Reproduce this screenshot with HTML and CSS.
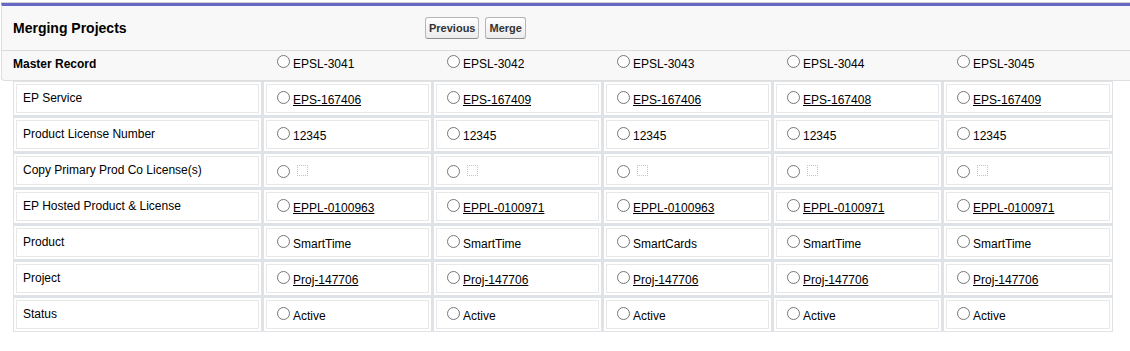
FILE: index.html
```html
<!DOCTYPE html>
<html lang="en">
<head>
  <meta charset="UTF-8">
  <meta name="viewport" content="width=device-width, initial-scale=1">
  <title>Merging Projects</title>
  <link rel="stylesheet" href="styles.css">
</head>
<body>

  <!-- Header block -->
  <div class="page-block">
    <div class="block-header">
      <h2 class="block-title">Merging Projects</h2>
      <div class="block-buttons">
        <button class="btn" type="button">Previous</button>
        <button class="btn" type="button">Merge</button>
      </div>
    </div>
    <div class="master-row">
      <span class="master-label">Master Record</span>
      <label class="opt"><input type="radio" name="master">EPSL-3041</label>
      <label class="opt"><input type="radio" name="master">EPSL-3042</label>
      <label class="opt"><input type="radio" name="master">EPSL-3043</label>
      <label class="opt"><input type="radio" name="master">EPSL-3044</label>
      <label class="opt"><input type="radio" name="master">EPSL-3045</label>
    </div>
  </div>

  <!-- Field comparison -->
  <div class="merge-grid">
    <div class="merge-row">
      <div class="cell"><div class="box label">EP Service</div></div>
      <div class="cell"><div class="box"><label class="opt"><input type="radio" name="svc"><a href="#">EPS-167406</a></label></div></div>
      <div class="cell"><div class="box"><label class="opt"><input type="radio" name="svc"><a href="#">EPS-167409</a></label></div></div>
      <div class="cell"><div class="box"><label class="opt"><input type="radio" name="svc"><a href="#">EPS-167406</a></label></div></div>
      <div class="cell"><div class="box"><label class="opt"><input type="radio" name="svc"><a href="#">EPS-167408</a></label></div></div>
      <div class="cell"><div class="box"><label class="opt"><input type="radio" name="svc"><a href="#">EPS-167409</a></label></div></div>
    </div>
    <div class="merge-row">
      <div class="cell"><div class="box label">Product License Number</div></div>
      <div class="cell"><div class="box"><label class="opt"><input type="radio" name="pln">12345</label></div></div>
      <div class="cell"><div class="box"><label class="opt"><input type="radio" name="pln">12345</label></div></div>
      <div class="cell"><div class="box"><label class="opt"><input type="radio" name="pln">12345</label></div></div>
      <div class="cell"><div class="box"><label class="opt"><input type="radio" name="pln">12345</label></div></div>
      <div class="cell"><div class="box"><label class="opt"><input type="radio" name="pln">12345</label></div></div>
    </div>
    <div class="merge-row">
      <div class="cell"><div class="box label">Copy Primary Prod Co License(s)</div></div>
      <div class="cell"><div class="box low"><label class="opt"><input type="radio" name="cpy"><span class="check"></span></label></div></div>
      <div class="cell"><div class="box low"><label class="opt"><input type="radio" name="cpy"><span class="check"></span></label></div></div>
      <div class="cell"><div class="box low"><label class="opt"><input type="radio" name="cpy"><span class="check"></span></label></div></div>
      <div class="cell"><div class="box low"><label class="opt"><input type="radio" name="cpy"><span class="check"></span></label></div></div>
      <div class="cell"><div class="box low"><label class="opt"><input type="radio" name="cpy"><span class="check"></span></label></div></div>
    </div>
    <div class="merge-row">
      <div class="cell"><div class="box label">EP Hosted Product &amp; License</div></div>
      <div class="cell"><div class="box"><label class="opt"><input type="radio" name="hpl"><a href="#">EPPL-0100963</a></label></div></div>
      <div class="cell"><div class="box"><label class="opt"><input type="radio" name="hpl"><a href="#">EPPL-0100971</a></label></div></div>
      <div class="cell"><div class="box"><label class="opt"><input type="radio" name="hpl"><a href="#">EPPL-0100963</a></label></div></div>
      <div class="cell"><div class="box"><label class="opt"><input type="radio" name="hpl"><a href="#">EPPL-0100971</a></label></div></div>
      <div class="cell"><div class="box"><label class="opt"><input type="radio" name="hpl"><a href="#">EPPL-0100971</a></label></div></div>
    </div>
    <div class="merge-row">
      <div class="cell"><div class="box label">Product</div></div>
      <div class="cell"><div class="box"><label class="opt"><input type="radio" name="prod">SmartTime</label></div></div>
      <div class="cell"><div class="box"><label class="opt"><input type="radio" name="prod">SmartTime</label></div></div>
      <div class="cell"><div class="box"><label class="opt"><input type="radio" name="prod">SmartCards</label></div></div>
      <div class="cell"><div class="box"><label class="opt"><input type="radio" name="prod">SmartTime</label></div></div>
      <div class="cell"><div class="box"><label class="opt"><input type="radio" name="prod">SmartTime</label></div></div>
    </div>
    <div class="merge-row">
      <div class="cell"><div class="box label">Project</div></div>
      <div class="cell"><div class="box"><label class="opt"><input type="radio" name="proj"><a href="#">Proj-147706</a></label></div></div>
      <div class="cell"><div class="box"><label class="opt"><input type="radio" name="proj"><a href="#">Proj-147706</a></label></div></div>
      <div class="cell"><div class="box"><label class="opt"><input type="radio" name="proj"><a href="#">Proj-147706</a></label></div></div>
      <div class="cell"><div class="box"><label class="opt"><input type="radio" name="proj"><a href="#">Proj-147706</a></label></div></div>
      <div class="cell"><div class="box"><label class="opt"><input type="radio" name="proj"><a href="#">Proj-147706</a></label></div></div>
    </div>
    <div class="merge-row">
      <div class="cell"><div class="box label">Status</div></div>
      <div class="cell"><div class="box"><label class="opt"><input type="radio" name="stat">Active</label></div></div>
      <div class="cell"><div class="box"><label class="opt"><input type="radio" name="stat">Active</label></div></div>
      <div class="cell"><div class="box"><label class="opt"><input type="radio" name="stat">Active</label></div></div>
      <div class="cell"><div class="box"><label class="opt"><input type="radio" name="stat">Active</label></div></div>
      <div class="cell"><div class="box"><label class="opt"><input type="radio" name="stat">Active</label></div></div>
    </div>
  </div>

</body>
</html>
```

FILE: styles.css
```css
:root {
  --accent: #6767c5;
  --panel-bg: #f8f8f8;
  --panel-line: #dedede;
  --band: #dfe2e6;
  --box-line: #e8e8e8;
}
* { box-sizing: border-box; }
html, body { overflow: hidden; }
body {
  margin: 0;
  font-family: "Liberation Sans", Arial, sans-serif;
  font-size: 12px;
  color: #000;
  background: #fff;
}

/* header block */
.page-block {
  margin: 3px -4px 0 1px;
  background: var(--panel-bg);
  border-top: 3px solid var(--accent);
  border-left: 1px solid var(--panel-line);
  border-bottom: 1px solid var(--panel-line);
  border-bottom-left-radius: 4px;
  box-shadow: 0 -1px 0 #d2d2d2;
}
.block-header {
  display: flex;
  align-items: center;
  height: 45px;
  padding-left: 11px;
  border-bottom: 1px solid #dbdbdb;
}
.block-title {
  margin: 0;
  width: 412px;
  font-size: 14px;
  font-weight: bold;
  color: #000;
}
.block-buttons {
  display: flex;
  gap: 6px;
}
.btn {
  height: 22px;
  padding: 0 3px;
  font-family: inherit;
  font-size: 11px;
  font-weight: bold;
  color: #333;
  background: linear-gradient(#ffffff, #ececec);
  border: 1px solid #b5b5b5;
  border-bottom-color: #8f8f8f;
  border-radius: 3px;
  cursor: pointer;
}
.master-row {
  display: grid;
  grid-template-columns: 259px repeat(4, 170px) 1fr;
  align-items: center;
  height: 29px;
  padding-left: 11px;
  padding-bottom: 9px;
}
.master-label { font-weight: bold; padding-top: 6px; }

/* radio + value */
.opt { display: block; white-space: nowrap; }
.opt input {
  margin: 3px 3px 0 5px;
  width: 13px;
  height: 13px;
  vertical-align: baseline;
}
.opt a { color: #000; text-decoration: underline; }
.check {
  display: inline-block;
  width: 11px;
  height: 11px;
  margin-left: 4px;
  border: 1px dotted #c4c4c4;
  vertical-align: 2px;
}

/* comparison grid */
.merge-grid {
  margin-left: 13px;
  width: 1100px;
  border: 1px solid var(--band);
  background: #fff;
}
.merge-row {
  display: grid;
  grid-template-columns: 250px repeat(4, 170px) 168px;
}
.cell {
  padding: 2px;
  border-right: 3px solid var(--band);
  border-bottom: 3px solid var(--band);
}
.cell:last-child { border-right: 0; }
.merge-row:last-child .cell { border-bottom: 0; }
.box {
  display: flex;
  align-items: center;
  height: 29px;
  padding-left: 5px;
  padding-bottom: 2px;
  border: 1px solid var(--box-line);
}
.box.label { padding-left: 6px; padding-bottom: 1px; }
.box.low { padding-top: 2px; padding-bottom: 0; }
```
